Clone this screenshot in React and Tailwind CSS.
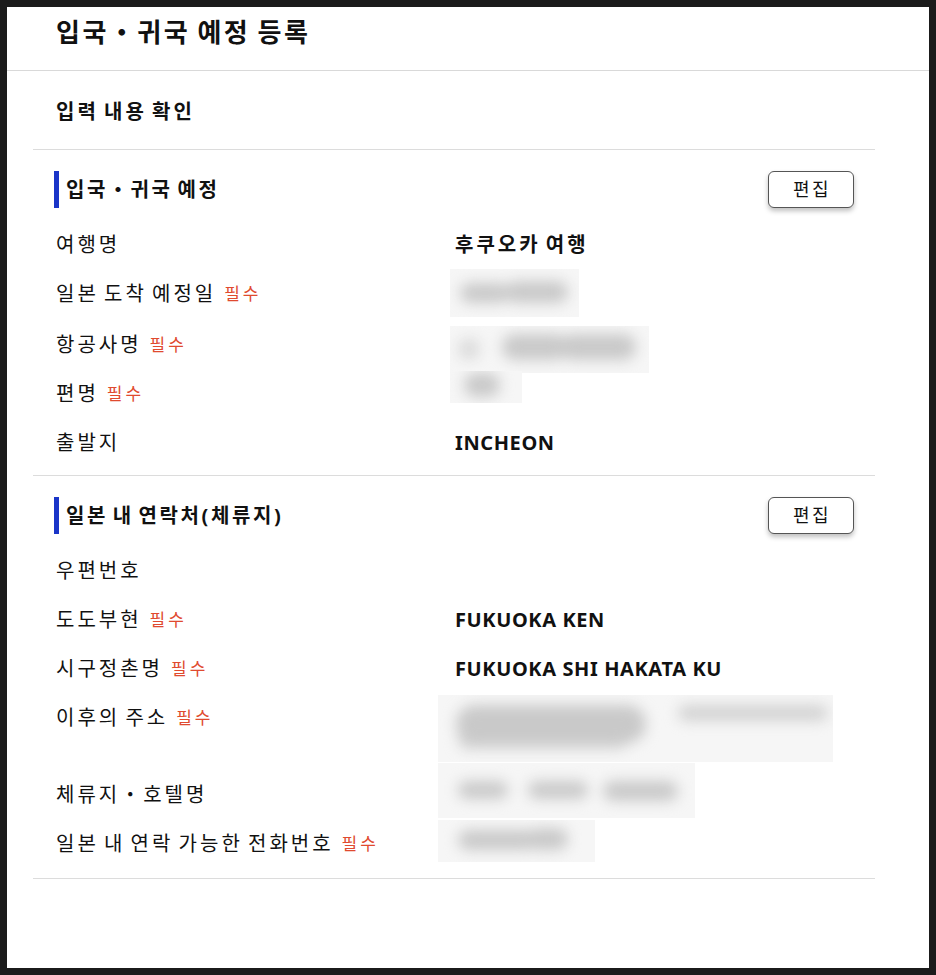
import React from "react";

const FONT = { fontFamily: '"Noto Sans", "Noto Sans CJK KR", sans-serif' };

function Req() {
  return <span className="ml-[8px] text-[17px] text-[#e04a2f] font-normal tracking-[3px]">필수</span>;
}

function Blur({ w, h, blobs, className = "" }) {
  return (
    <div className={"relative overflow-hidden bg-[#f6f6f6] " + className} style={{ width: w, height: h }}>
      <div className="absolute inset-0 blur-[7px]">
        {blobs.map((b, i) => (
          <div
            key={i}
            className="absolute rounded-full bg-[#c9c9c9]"
            style={{ left: b[0], top: b[1], width: b[2], height: b[3], opacity: b[4] ?? 1 }}
          />
        ))}
      </div>
    </div>
  );
}

function Row({ label, req, children, h = 49 }) {
  return (
    <div className="flex" style={{ height: h }}>
      <div className="w-[422px] shrink-0 pl-[23px] h-[49px] flex items-center text-[20px] text-[#111] tracking-[3px] [word-spacing:-3px]">
        <span>{label}</span>
        {req && <Req />}
      </div>
      <div className="flex-1 h-[49px] flex items-center">{children}</div>
    </div>
  );
}

function Val({ children, ko }) {
  return (
    <span
      className={
        "text-[20px] font-bold text-[#111] " + (ko ? "tracking-[3px] [word-spacing:-3px]" : "tracking-[0.6px]")
      }
    >
      {children}
    </span>
  );
}

function SectionHeader({ title }) {
  return (
    <div className="flex items-center justify-between pl-[21px] pr-[21px] h-[37px]">
      <div className="flex items-center h-full">
        <div className="w-[5px] h-[37px] bg-[#1a35c8]" />
        <h3 className="ml-[7px] text-[20px] font-bold text-[#111] tracking-[2.6px] [word-spacing:-3px]">{title}</h3>
      </div>
      <button className="w-[86px] h-[37px] rounded-[6px] border border-[#555] bg-white text-[18px] text-[#111] tracking-[2.5px] pl-[2px] shadow-[0_3px_5px_rgba(0,0,0,0.25)]">
        편집
      </button>
    </div>
  );
}

export default function App() {
  return (
    <div className="min-h-[975px] bg-[#1b1b1b] p-[7px]" style={FONT}>
      <div className="bg-white h-[961px]">
        <header className="h-[64px] border-b border-[#d9d9d9] pl-[49px] flex items-center">
          <h1 className="text-[26px] font-bold text-[#111] -mt-[12px] tracking-[2.5px] [word-spacing:-2px]">
            입국・귀국 예정 등록
          </h1>
        </header>
        <main className="pl-[26px] pr-[54px]">
          <div className="h-[79px] border-b border-[#dcdcdc] pl-[23px] flex items-center">
            <h2 className="text-[20px] font-bold text-[#111] mt-[4px] tracking-[3px] [word-spacing:-3px]">
              입력 내용 확인
            </h2>
          </div>

          <section className="pt-[21px] pb-[8px] border-b border-[#dcdcdc]">
            <SectionHeader title="입국・귀국 예정" />
            <div className="mt-[12px]">
              <Row label="여행명">
                <Val ko>후쿠오카 여행</Val>
              </Row>
              <Row label="일본 도착 예정일" req h={51}>
                <Blur
                  w={129}
                  h={48}
                  className="-ml-[5px] -mt-[1px]"
                  blobs={[
                    [10, 14, 50, 20],
                    [56, 12, 62, 22],
                  ]}
                />
              </Row>
              <Row label="항공사명" req>
                <div className="flex flex-col -ml-[5px] mt-[10px]">
                  <Blur
                    w={199}
                    h={47}
                    blobs={[
                      [8, 12, 22, 22, 0.6],
                      [52, 8, 66, 26],
                      [110, 8, 76, 26],
                    ]}
                  />
                </div>
              </Row>
              <Row label="편명" req>
                <Blur w={72} h={32} className="-ml-[5px] -mt-[14px]" blobs={[[14, 2, 36, 24]]} />
              </Row>
              <Row label="출발지">
                <Val>INCHEON</Val>
              </Row>
            </div>
          </section>

          <section className="pt-[21px] pb-[10px] border-b border-[#dcdcdc]">
            <SectionHeader title="일본 내 연락처(체류지)" />
            <div className="mt-[12px]">
              <Row label="우편번호" />
              <Row label="도도부현" req>
                <Val>FUKUOKA KEN</Val>
              </Row>
              <Row label="시구정촌명" req>
                <Val>FUKUOKA SHI HAKATA KU</Val>
              </Row>
              <div className="flex h-[77px]">
                <div className="w-[422px] shrink-0 pl-[23px] h-[49px] flex items-center text-[20px] text-[#111] tracking-[3px] [word-spacing:-3px]">
                  <span>이후의 주소</span>
                  <Req />
                </div>
                <div className="flex-1 pt-[2px]">
                  <Blur
                    w={395}
                    h={67}
                    className="-ml-[17px]"
                    blobs={[
                      [18, 10, 190, 38],
                      [240, 10, 150, 16, 0.8],
                      [20, 36, 170, 18, 0.8],
                    ]}
                  />
                </div>
              </div>
              <Row label="체류지・호텔명">
                <Blur
                  w={257}
                  h={55}
                  className="-ml-[17px] -mt-[8px]"
                  blobs={[
                    [20, 18, 50, 18],
                    [90, 18, 60, 18],
                    [165, 18, 75, 20],
                  ]}
                />
              </Row>
              <Row label="일본 내 연락 가능한 전화번호" req>
                <Blur
                  w={157}
                  h={42}
                  className="-ml-[17px] -mt-[5px]"
                  blobs={[
                    [20, 10, 80, 20],
                    [90, 8, 40, 22],
                  ]}
                />
              </Row>
            </div>
          </section>
        </main>
      </div>
    </div>
  );
}
